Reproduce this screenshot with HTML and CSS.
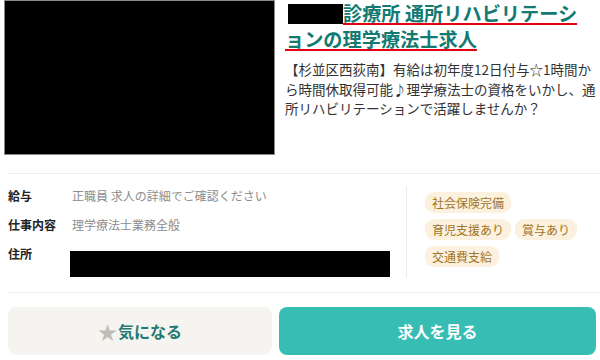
FILE: index.html
```html
<!DOCTYPE html>
<html lang="ja">
<head>
<meta charset="utf-8">
<link rel="stylesheet" href="styles.css">
</head>
<body>
<div class="card">
  <div class="top">
    <div class="photo"></div>
    <div class="info">
      <h2 class="title"><span class="redact"></span><span class="mark">診療所 通所リハビリテーシ</span><br><span class="mark">ョンの理学療法士求人</span></h2>
      <p class="desc">【杉並区西荻南】有給は初年度12日付与☆1時間か<br>ら時間休取得可能♪理学療法士の資格をいかし、通<br>所リハビリテーションで活躍しませんか？</p>
    </div>
  </div>
  <div class="details">
    <dl class="facts">
      <div class="row"><dt>給与</dt><dd>正職員 求人の詳細でご確認ください</dd></div>
      <div class="row"><dt>仕事内容</dt><dd>理学療法士業務全般</dd></div>
      <div class="row"><dt>住所</dt><dd><span class="addr"></span></dd></div>
    </dl>
    <ul class="tags">
      <li>社会保険完備</li>
      <li>育児支援あり</li>
      <li>賞与あり</li>
      <li>交通費支給</li>
    </ul>
  </div>
  <div class="actions">
    <button class="btn fav"><span class="star">★</span>気になる</button>
    <button class="btn view">求人を見る</button>
  </div>
</div>
</body>
</html>
```
FILE: styles.css
```css
* { box-sizing: border-box; }
html, body {
  margin: 0;
  padding: 0;
  background: #fff;
  overflow: hidden;
}
body {
  font-family: "Noto Sans CJK JP", "Noto Sans", sans-serif;
  color: #333;
}
.card {
  width: 600px;
  height: 360px;
}
.top {
  display: flex;
  gap: 10px;
  padding-left: 4px;
}
.photo {
  width: 271px;
  height: 155px;
  background: #000;
  border: 1px solid #8a8a8a;
  flex: none;
}
.info {
  flex: 1;
  min-width: 0;
}
.title {
  margin: 0;
  font-size: 19.2px;
  line-height: 26px;
  font-weight: 700;
  color: #137a71;
  white-space: nowrap;
}
.redact {
  display: inline-block;
  width: 55px;
  height: 20px;
  background: #000;
  vertical-align: -3px;
  margin-left: 3px;
}
.mark {
  text-decoration: underline;
  text-decoration-color: #e60012;
  text-decoration-thickness: 2px;
  text-underline-offset: 2px;
  text-decoration-skip-ink: none;
}
.desc {
  margin: 8px 0 0;
  font-size: 13.5px;
  line-height: 19.5px;
  color: #333;
  white-space: nowrap;
}
.details {
  display: flex;
  margin: 18px 0 0 8px;
  padding: 12px 0 14px;
  border-top: 1px solid #efece4;
  border-bottom: 1px solid #efece4;
}
.facts {
  margin: 0;
  width: 399px;
  border-right: 1px solid #efece4;
  display: flex;
  flex-direction: column;
  gap: 9px;
  min-height: 92px;
}
.row {
  display: flex;
  line-height: 20px;
}
.row dt {
  width: 64px;
  font-size: 12px;
  font-weight: 700;
  color: #222;
}
.row dd {
  margin: 0;
  font-size: 12px;
  color: #8c8c8c;
}
.addr {
  display: block;
  width: 320px;
  height: 26px;
  background: #000;
  margin: 7px 0 0 -2px;
}
.tags {
  list-style: none;
  margin: 0;
  padding: 6px 4px 0 18px;
  flex: 1;
  display: flex;
  flex-wrap: wrap;
  align-content: flex-start;
  gap: 6px 4px;
}
.tags li {
  font-size: 12px;
  line-height: 21px;
  padding: 0 7px;
  background: #fcf1de;
  color: #9f7428;
  border-radius: 9px;
}
.actions {
  display: grid;
  grid-template-columns: 264px 317px;
  gap: 7px;
  padding: 14px 0 0 8px;
}
.btn {
  height: 48px;
  border: none;
  border-radius: 8px;
  font-family: "Noto Sans CJK JP", "Noto Sans", sans-serif;
  font-size: 16px;
  font-weight: 700;
  display: flex;
  align-items: center;
  justify-content: center;
  padding: 0;
}
.fav {
  background: #f5f4f0;
  color: #1d7a72;
}
.star {
  color: #bfbdb7;
  font-size: 19px;
  line-height: 1;
  margin-right: 1px;
}
.view {
  background: #38bdb5;
  color: #fff;
}
```
